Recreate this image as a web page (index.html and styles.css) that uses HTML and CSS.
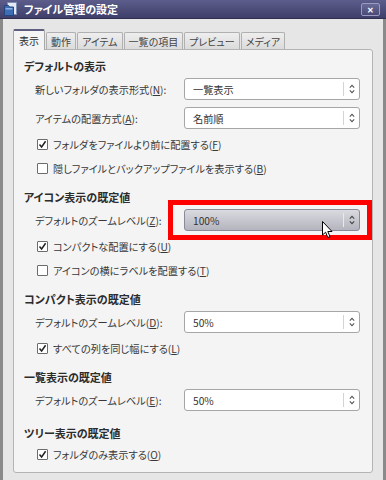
FILE: index.html
```html
<!DOCTYPE html>
<html lang="ja">
<head>
  <meta charset="UTF-8">
  <title>ファイル管理の設定</title>
  <link rel="stylesheet" href="styles.css">
</head>
<body>
  <div class="window">
    <div class="titlebar">
      <svg class="app-icon" width="13" height="14" viewBox="0 0 13 14">
        <rect x="3.5" y="0.5" width="9" height="12" fill="#e4eaf4" stroke="#7d8fb0"/>
        <path d="M0.5 3.5 H4.5 L5.5 5 H9.5 V13.5 H0.5 Z" fill="#3d6db5" stroke="#24467e"/>
        <rect x="1.5" y="6" width="7" height="1.5" fill="#8fb2e6"/>
      </svg>
      <span class="title">ファイル管理の設定</span>
      <span class="close">✕</span>
    </div>

    <div class="body">
      <div class="tabs">
        <div class="tab active">表示</div>
        <div class="tab">動作</div>
        <div class="tab">アイテム</div>
        <div class="tab">一覧の項目</div>
        <div class="tab">プレビュー</div>
        <div class="tab">メディア</div>
      </div>

      <div class="panel">
        <div class="section">
          <div class="section-title">デフォルトの表示</div>
          <div class="field">
            <label>新しいフォルダの表示形式(<u>N</u>):</label>
            <div class="combo"><span class="value">一覧表示</span><span class="arrows"><svg width="6" height="10" viewBox="0 0 6 10"><path d="M0.8 3.6 L3 1.4 L5.2 3.6 M0.8 6.4 L3 8.6 L5.2 6.4" fill="none" stroke="#555" stroke-width="1.1"/></svg></span></div>
          </div>
          <div class="field">
            <label>アイテムの配置方式(<u>A</u>):</label>
            <div class="combo"><span class="value">名前順</span><span class="arrows"><svg width="6" height="10" viewBox="0 0 6 10"><path d="M0.8 3.6 L3 1.4 L5.2 3.6 M0.8 6.4 L3 8.6 L5.2 6.4" fill="none" stroke="#555" stroke-width="1.1"/></svg></span></div>
          </div>
          <div class="check">
            <span class="box"><svg width="9" height="9" viewBox="0 0 9 9"><path d="M1.5 4.5 L3.6 7 L7.6 1.2" fill="none" stroke="#222" stroke-width="1.5"/></svg></span>
            <span>フォルダをファイルより前に配置する(<u>F</u>)</span>
          </div>
          <div class="check">
            <span class="box"></span>
            <span>隠しファイルとバックアップファイルを表示する(<u>B</u>)</span>
          </div>
        </div>

        <div class="section">
          <div class="section-title">アイコン表示の既定値</div>
          <div class="field">
            <label>デフォルトのズームレベル(<u>Z</u>):</label>
            <div class="combo hot">
              <span class="value">100%</span><span class="arrows"><svg width="6" height="10" viewBox="0 0 6 10"><path d="M0.8 3.6 L3 1.4 L5.2 3.6 M0.8 6.4 L3 8.6 L5.2 6.4" fill="none" stroke="#444" stroke-width="1.1"/></svg></span>
              <span class="highlight"></span>
              <svg class="pointer" width="12" height="18" viewBox="0 0 12 18"><path d="M0.5 0.5 V14 L3.6 11.2 L5.8 16.5 L8 15.6 L5.8 10.5 H10 Z" fill="#fff" stroke="#000" stroke-linejoin="round"/></svg>
            </div>
          </div>
          <div class="check">
            <span class="box"><svg width="9" height="9" viewBox="0 0 9 9"><path d="M1.5 4.5 L3.6 7 L7.6 1.2" fill="none" stroke="#222" stroke-width="1.5"/></svg></span>
            <span>コンパクトな配置にする(<u>U</u>)</span>
          </div>
          <div class="check">
            <span class="box"></span>
            <span>アイコンの横にラベルを配置する(<u>T</u>)</span>
          </div>
        </div>

        <div class="section">
          <div class="section-title">コンパクト表示の既定値</div>
          <div class="field">
            <label>デフォルトのズームレベル(<u>D</u>):</label>
            <div class="combo"><span class="value">50%</span><span class="arrows"><svg width="6" height="10" viewBox="0 0 6 10"><path d="M0.8 3.6 L3 1.4 L5.2 3.6 M0.8 6.4 L3 8.6 L5.2 6.4" fill="none" stroke="#555" stroke-width="1.1"/></svg></span></div>
          </div>
          <div class="check">
            <span class="box"><svg width="9" height="9" viewBox="0 0 9 9"><path d="M1.5 4.5 L3.6 7 L7.6 1.2" fill="none" stroke="#222" stroke-width="1.5"/></svg></span>
            <span>すべての列を同じ幅にする(<u>L</u>)</span>
          </div>
        </div>

        <div class="section">
          <div class="section-title">一覧表示の既定値</div>
          <div class="field">
            <label>デフォルトのズームレベル(<u>E</u>):</label>
            <div class="combo"><span class="value">50%</span><span class="arrows"><svg width="6" height="10" viewBox="0 0 6 10"><path d="M0.8 3.6 L3 1.4 L5.2 3.6 M0.8 6.4 L3 8.6 L5.2 6.4" fill="none" stroke="#555" stroke-width="1.1"/></svg></span></div>
          </div>
        </div>

        <div class="section tree">
          <div class="section-title">ツリー表示の既定値</div>
          <div class="check">
            <span class="box"><svg width="9" height="9" viewBox="0 0 9 9"><path d="M1.5 4.5 L3.6 7 L7.6 1.2" fill="none" stroke="#222" stroke-width="1.5"/></svg></span>
            <span>フォルダのみ表示する(<u>O</u>)</span>
          </div>
        </div>
      </div>
    </div>
  </div>
</body>
</html>
```

FILE: styles.css
```css
* {
  box-sizing: border-box;
}
body {
  margin: 0;
  font-family: "Noto Sans CJK JP", "Noto Sans", sans-serif;
  font-size: 10.2px;
  font-feature-settings: "palt";
  color: #383838;
}
u {
  text-underline-offset: 1px;
}
.window {
  width: 386px;
  height: 480px;
  overflow: hidden;
  display: flex;
  flex-direction: column;
}
.titlebar {
  height: 19px;
  display: flex;
  align-items: center;
  background: linear-gradient(#5d5d8c, #3f3f6a);
  border-bottom: 1px solid #2e2e50;
}
.app-icon {
  margin-left: 4px;
}
.title {
  margin-left: 7px;
  color: #fff;
  font-weight: bold;
  font-size: 11px;
  line-height: 19px;
}
.close {
  margin-left: auto;
  margin-right: 6px;
  width: 19px;
  height: 13px;
  border: 1px solid #9a9ac2;
  border-radius: 2px;
  background: linear-gradient(#6a6a98, #4a4a78);
  color: #fff;
  font-size: 8px;
  font-weight: bold;
  line-height: 11px;
  text-align: center;
}
.body {
  flex: 1;
  display: flex;
  flex-direction: column;
  background: #e6e6e6;
  border-left: 3px solid #8a8a8a;
  border-right: 3px solid #8a8a8a;
  padding: 10px 10px 7px 10px;
}
.tabs {
  display: flex;
  align-items: flex-end;
  height: 21px;
}
.tab {
  height: 18px;
  padding: 0 4px;
  line-height: 17px;
  font-size: 10px;
  border: 1px solid #b0b0b0;
  border-bottom: none;
  border-radius: 2px 2px 0 0;
  background: linear-gradient(#eeeeee, #dadada);
  color: #444;
  margin-right: 1px;
}
.tab.active {
  height: 21px;
  line-height: 20px;
  padding: 0 5px;
  background: #f4f4f4;
  border-color: #a8a8a8;
  border-top: 2px solid #5e5e80;
  position: relative;
  z-index: 1;
  color: #2a2a2a;
}
.panel {
  flex: 1;
  margin-top: -1px;
  border: 1px solid #b4b4b4;
  border-radius: 0 3px 3px 3px;
  background: #f4f4f4;
  padding: 6px 10px 8px 10px;
}
.section + .section {
  margin-top: 9px;
}
.section.tree {
  margin-top: 12px;
}
.section-title {
  height: 20px;
  line-height: 20px;
  font-size: 11px;
  font-weight: bold;
  color: #2c2c2c;
}
.field {
  display: flex;
  align-items: center;
  height: 22px;
  margin-top: 2px;
  padding-left: 11px;
}
.field + .field {
  margin-top: 7px;
}
.field label {
  width: 149px;
}
.combo {
  position: relative;
  width: 176px;
  height: 22px;
  display: flex;
  align-items: center;
  border: 1px solid #a6a6a6;
  border-radius: 3px;
  background: #fff;
  color: #333;
}
.combo .value {
  flex: 1;
  padding-left: 8px;
}
.combo .arrows {
  width: 16px;
  height: 14px;
  border-left: 1px solid #d4d4d4;
  display: flex;
  align-items: center;
  justify-content: center;
}
.combo.hot {
  background: linear-gradient(#dadae0, #b4b4be);
  border-color: #8a8a98;
}
.combo.hot .arrows {
  border-left-color: #e8e8ee;
}
.highlight {
  position: absolute;
  left: -17px;
  top: -10px;
  right: -13px;
  bottom: -10px;
  border: 5px solid #ff0000;
}
.pointer {
  position: absolute;
  left: 137px;
  top: 11px;
}
.check {
  display: flex;
  align-items: center;
  height: 20px;
  padding-left: 13px;
}
.field + .check {
  margin-top: 5px;
}
.check + .check {
  margin-top: 4px;
}
.section-title + .check {
  margin-top: 1px;
}
.box {
  width: 11px;
  height: 11px;
  margin-right: 5px;
  border: 1px solid #6c6c6c;
  border-radius: 1px;
  background: #fff;
  display: flex;
  align-items: center;
  justify-content: center;
}
```
